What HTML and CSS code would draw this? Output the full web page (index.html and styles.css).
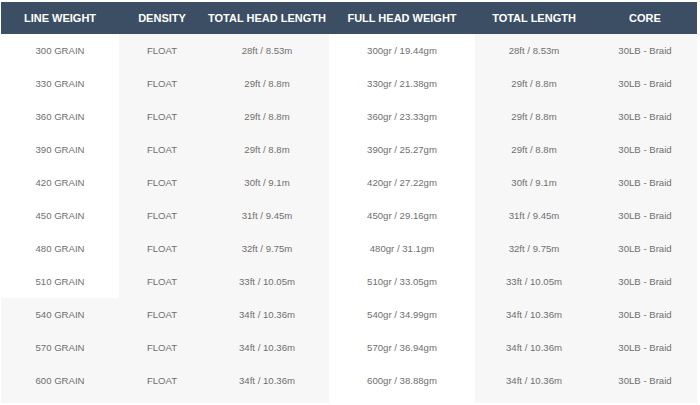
FILE: index.html
```html
<!DOCTYPE html>
<html>
<head>
<meta charset="utf-8">
<link rel="stylesheet" href="styles.css">
</head>
<body>
<table class="spec">
  <colgroup>
    <col class="c1"><col class="c2"><col class="c3"><col class="c4"><col class="c5"><col class="c6">
  </colgroup>
  <thead>
    <tr><th>LINE WEIGHT</th><th>DENSITY</th><th>TOTAL HEAD LENGTH</th><th>FULL HEAD WEIGHT</th><th>TOTAL LENGTH</th><th>CORE</th></tr>
  </thead>
  <tbody>
    <tr><td class="w">300 GRAIN</td><td>FLOAT</td><td>28ft / 8.53m</td><td class="w">300gr / 19.44gm</td><td>28ft / 8.53m</td><td>30LB - Braid</td></tr>
    <tr><td class="w">330 GRAIN</td><td>FLOAT</td><td>29ft / 8.8m</td><td class="w">330gr / 21.38gm</td><td>29ft / 8.8m</td><td>30LB - Braid</td></tr>
    <tr><td class="w">360 GRAIN</td><td>FLOAT</td><td>29ft / 8.8m</td><td class="w">360gr / 23.33gm</td><td>29ft / 8.8m</td><td>30LB - Braid</td></tr>
    <tr><td class="w">390 GRAIN</td><td>FLOAT</td><td>29ft / 8.8m</td><td class="w">390gr / 25.27gm</td><td>29ft / 8.8m</td><td>30LB - Braid</td></tr>
    <tr><td class="w">420 GRAIN</td><td>FLOAT</td><td>30ft / 9.1m</td><td class="w">420gr / 27.22gm</td><td>30ft / 9.1m</td><td>30LB - Braid</td></tr>
    <tr><td class="w">450 GRAIN</td><td>FLOAT</td><td>31ft / 9.45m</td><td class="w">450gr / 29.16gm</td><td>31ft / 9.45m</td><td>30LB - Braid</td></tr>
    <tr><td class="w">480 GRAIN</td><td>FLOAT</td><td>32ft / 9.75m</td><td class="w">480gr / 31.1gm</td><td>32ft / 9.75m</td><td>30LB - Braid</td></tr>
    <tr><td class="w">510 GRAIN</td><td>FLOAT</td><td>33ft / 10.05m</td><td class="w">510gr / 33.05gm</td><td>33ft / 10.05m</td><td>30LB - Braid</td></tr>
    <tr><td>540 GRAIN</td><td>FLOAT</td><td>34ft / 10.36m</td><td class="w">540gr / 34.99gm</td><td>34ft / 10.36m</td><td>30LB - Braid</td></tr>
    <tr><td>570 GRAIN</td><td>FLOAT</td><td>34ft / 10.36m</td><td class="w">570gr / 36.94gm</td><td>34ft / 10.36m</td><td>30LB - Braid</td></tr>
    <tr><td>600 GRAIN</td><td>FLOAT</td><td>34ft / 10.36m</td><td class="w">600gr / 38.88gm</td><td>34ft / 10.36m</td><td>30LB - Braid</td></tr>
    <tr class="tail"><td></td><td></td><td></td><td class="w"></td><td></td><td></td></tr>
  </tbody>
</table>
</body>
</html>
```
FILE: styles.css
```css
html, body {
  margin: 0;
  padding: 0;
  background: #ffffff;
}
body {
  padding: 2px 0 0 1px;
  font-family: "Liberation Sans", Arial, sans-serif;
}
.spec {
  border-collapse: collapse;
  border-spacing: 0;
  table-layout: fixed;
  width: 696px;
}
.c1 { width: 118px; }
.c2 { width: 86px; }
.c3 { width: 124px; }
.c4 { width: 146px; }
.c5 { width: 118px; }
.c6 { width: 104px; }
.spec th {
  background: #3c4e63;
  color: #ffffff;
  font-weight: bold;
  font-size: 11px;
  height: 32px;
  padding: 0;
  text-align: center;
  vertical-align: middle;
  white-space: nowrap;
}
.spec td {
  background: #f7f7f7;
  color: #6f6f6f;
  font-size: 9.6px;
  height: 33px;
  padding: 0;
  text-align: center;
  vertical-align: middle;
  white-space: nowrap;
}
.spec td.w {
  background: #ffffff;
}
.spec .tail td {
  height: 6px;
}
```
